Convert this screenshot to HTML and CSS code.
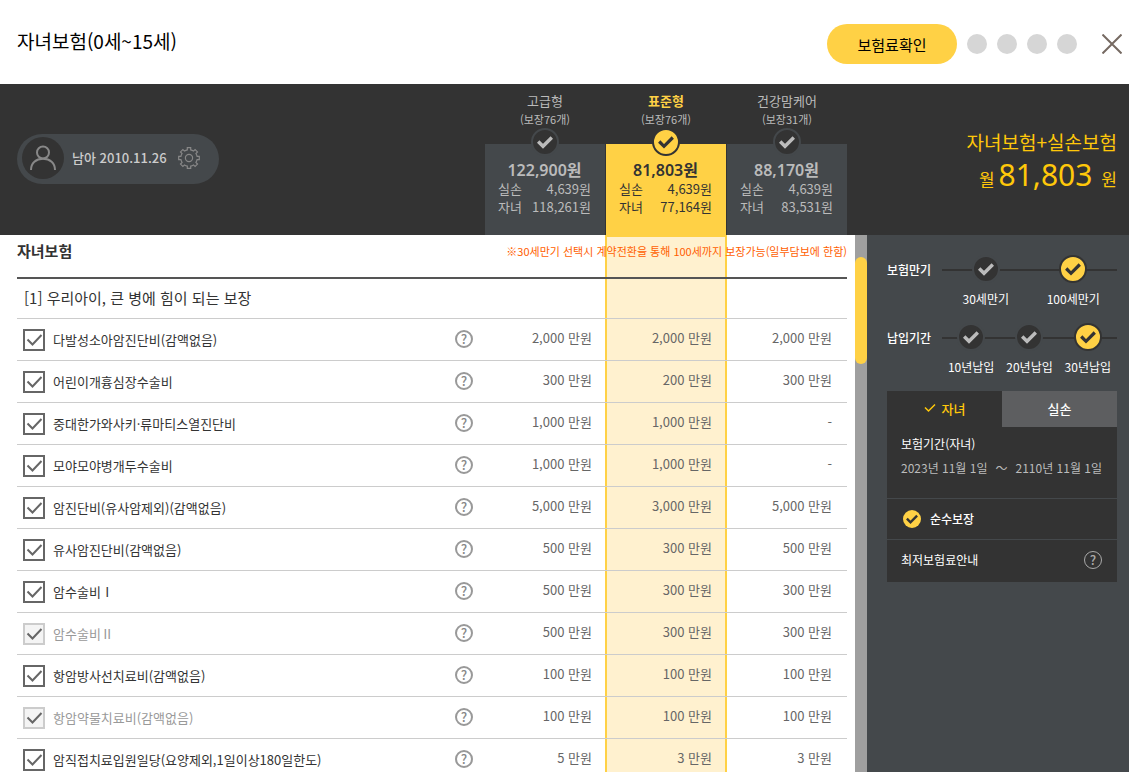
FILE: index.html
```html
<!DOCTYPE html>
<html lang="ko">

<head>
    <meta charset="UTF-8" />
    <meta name="viewport" content="width=device-width, initial-scale=1.0">
    <title>자녀보험</title>
    <link rel="stylesheet" href="styles.css">
</head>

<body>

    <header class="header">
        <h1 class="title">자녀보험(0세~15세)</h1>
        <button class="btn-check" type="button">보험료확인</button>
        <div class="steps">
            <span class="step"></span>
            <span class="step"></span>
            <span class="step"></span>
            <span class="step"></span>
        </div>
        <button class="btn-close" type="button" aria-label="닫기">
            <svg width="20" height="20" viewBox="0 0 20 20"><path d="M0.5 0.5L19.5 19.5M19.5 0.5L0.5 19.5" /></svg>
        </button>
    </header>

    <section class="summary">

        <div class="user">
            <span class="avatar">
                <svg width="26" height="26" viewBox="0 0 26 26"><circle cx="13" cy="7.5" r="6" /><path d="M1 25C1 18 6 13.8 13 13.8S25 18 25 25" /></svg>
            </span>
            <span class="user-name">남아 2010.11.26</span>
            <button class="btn-setting" type="button" aria-label="설정">
                <svg width="22" height="22" viewBox="0 0 22 22"><circle cx="11" cy="11" r="3.6" /><path d="M9.3 0.7h3.4v2.2a8.3 8.3 0 0 1 2.8 1.2l1.6-1.6 2.4 2.4-1.6 1.6a8.3 8.3 0 0 1 1.2 2.8h2.2v3.4h-2.2a8.3 8.3 0 0 1-1.2 2.8l1.6 1.6-2.4 2.4-1.6-1.6a8.3 8.3 0 0 1-2.8 1.2v2.2H9.3v-2.2a8.3 8.3 0 0 1-2.8-1.2l-1.6 1.6-2.4-2.4 1.6-1.6a8.3 8.3 0 0 1-1.2-2.8H0.7V9.3h2.2a8.3 8.3 0 0 1 1.2-2.8L2.5 4.9l2.4-2.4 1.6 1.6a8.3 8.3 0 0 1 2.8-1.2z" /></svg>
            </button>
        </div>

        <div class="plans">
            <label class="plan">
                <strong class="plan-name">고급형</strong>
                <span class="plan-count">(보장76개)</span>
                <span class="plan-card">
                    <input class="round-check" type="radio" name="plan">
                    <b class="plan-price">122,900원</b>
                    <span class="plan-row"><span>실손</span><span>4,639원</span></span>
                    <span class="plan-row"><span>자녀</span><span>118,261원</span></span>
                </span>
            </label>
            <label class="plan plan-on">
                <strong class="plan-name">표준형</strong>
                <span class="plan-count">(보장76개)</span>
                <span class="plan-card">
                    <input class="round-check" type="radio" name="plan" checked>
                    <b class="plan-price">81,803원</b>
                    <span class="plan-row"><span>실손</span><span>4,639원</span></span>
                    <span class="plan-row"><span>자녀</span><span>77,164원</span></span>
                </span>
            </label>
            <label class="plan">
                <strong class="plan-name">건강맘케어</strong>
                <span class="plan-count">(보장31개)</span>
                <span class="plan-card">
                    <input class="round-check" type="radio" name="plan">
                    <b class="plan-price">88,170원</b>
                    <span class="plan-row"><span>실손</span><span>4,639원</span></span>
                    <span class="plan-row"><span>자녀</span><span>83,531원</span></span>
                </span>
            </label>
        </div>

        <div class="total">
            <p class="total-name">자녀보험+실손보험</p>
            <p class="total-price"><span>월</span><strong>81,803</strong><span>원</span></p>
        </div>

    </section>

    <main class="content">

        <div class="coverage">
            <div class="coverage-inner">

                <div class="column-mark"></div>

                <div class="coverage-head">
                    <h2>자녀보험</h2>
                    <p>※30세만기 선택시 계약전환을 통해 100세까지 보장가능(일부담보에 한함)</p>
                </div>

                <table class="coverage-table">
                    <colgroup>
                        <col>
                        <col class="col-help">
                        <col class="col-price">
                        <col class="col-price">
                        <col class="col-price">
                    </colgroup>
                    <thead>
                        <tr>
                            <th colspan="5">[1] 우리아이, 큰 병에 힘이 되는 보장</th>
                        </tr>
                    </thead>
                    <tbody>
                        <tr>
                            <td><label class="item"><input type="checkbox" checked>다발성소아암진단비(감액없음)</label></td>
                            <td><button class="help" type="button">?</button></td>
                            <td class="price">2,000 만원</td>
                            <td class="price">2,000 만원</td>
                            <td class="price">2,000 만원</td>
                        </tr>
                        <tr>
                            <td><label class="item"><input type="checkbox" checked>어린이개흉심장수술비</label></td>
                            <td><button class="help" type="button">?</button></td>
                            <td class="price">300 만원</td>
                            <td class="price">200 만원</td>
                            <td class="price">300 만원</td>
                        </tr>
                        <tr>
                            <td><label class="item"><input type="checkbox" checked>중대한가와사키·류마티스열진단비</label></td>
                            <td><button class="help" type="button">?</button></td>
                            <td class="price">1,000 만원</td>
                            <td class="price">1,000 만원</td>
                            <td class="price">-</td>
                        </tr>
                        <tr>
                            <td><label class="item"><input type="checkbox" checked>모야모야병개두수술비</label></td>
                            <td><button class="help" type="button">?</button></td>
                            <td class="price">1,000 만원</td>
                            <td class="price">1,000 만원</td>
                            <td class="price">-</td>
                        </tr>
                        <tr>
                            <td><label class="item"><input type="checkbox" checked>암진단비(유사암제외)(감액없음)</label></td>
                            <td><button class="help" type="button">?</button></td>
                            <td class="price">5,000 만원</td>
                            <td class="price">3,000 만원</td>
                            <td class="price">5,000 만원</td>
                        </tr>
                        <tr>
                            <td><label class="item"><input type="checkbox" checked>유사암진단비(감액없음)</label></td>
                            <td><button class="help" type="button">?</button></td>
                            <td class="price">500 만원</td>
                            <td class="price">300 만원</td>
                            <td class="price">500 만원</td>
                        </tr>
                        <tr>
                            <td><label class="item"><input type="checkbox" checked>암수술비Ⅰ</label></td>
                            <td><button class="help" type="button">?</button></td>
                            <td class="price">500 만원</td>
                            <td class="price">300 만원</td>
                            <td class="price">300 만원</td>
                        </tr>
                        <tr>
                            <td><label class="item item-off"><input type="checkbox" checked disabled>암수술비Ⅱ</label></td>
                            <td><button class="help" type="button">?</button></td>
                            <td class="price">500 만원</td>
                            <td class="price">300 만원</td>
                            <td class="price">300 만원</td>
                        </tr>
                        <tr>
                            <td><label class="item"><input type="checkbox" checked>항암방사선치료비(감액없음)</label></td>
                            <td><button class="help" type="button">?</button></td>
                            <td class="price">100 만원</td>
                            <td class="price">100 만원</td>
                            <td class="price">100 만원</td>
                        </tr>
                        <tr>
                            <td><label class="item item-off"><input type="checkbox" checked disabled>항암약물치료비(감액없음)</label></td>
                            <td><button class="help" type="button">?</button></td>
                            <td class="price">100 만원</td>
                            <td class="price">100 만원</td>
                            <td class="price">100 만원</td>
                        </tr>
                        <tr>
                            <td><label class="item"><input type="checkbox" checked>암직접치료입원일당(요양제외,1일이상180일한도)</label></td>
                            <td><button class="help" type="button">?</button></td>
                            <td class="price">5 만원</td>
                            <td class="price">3 만원</td>
                            <td class="price">3 만원</td>
                        </tr>
                    </tbody>
                </table>

            </div>
        </div>

        <div class="scrollbar"><div class="scroll-thumb"></div></div>

        <aside class="side">

            <div class="option">
                <h3>보험만기</h3>
                <div class="option-list">
                    <label><input class="round-check" type="radio" name="maturity"><span>30세만기</span></label>
                    <label><input class="round-check" type="radio" name="maturity" checked><span>100세만기</span></label>
                </div>
            </div>

            <div class="option">
                <h3>납입기간</h3>
                <div class="option-list">
                    <label><input class="round-check" type="radio" name="payment"><span>10년납입</span></label>
                    <label><input class="round-check" type="radio" name="payment"><span>20년납입</span></label>
                    <label><input class="round-check" type="radio" name="payment" checked><span>30년납입</span></label>
                </div>
            </div>

            <div class="tabs">
                <button class="tab tab-on" type="button">
                    <svg width="12" height="10" viewBox="0 0 12 10"><path d="M1 4.5L4.5 8L11 1.5" /></svg>
                    자녀
                </button>
                <button class="tab" type="button">실손</button>
            </div>

            <div class="panel">
                <div class="period">
                    <h4>보험기간(자녀)</h4>
                    <p><span>2023년 11월 1일</span><span>～</span><span>2110년 11월 1일</span></p>
                </div>
                <label class="pure"><input class="round-check" type="radio" name="type" checked>순수보장</label>
                <div class="guide">
                    <span>최저보험료안내</span>
                    <button class="help help-dark" type="button">?</button>
                </div>
            </div>

        </aside>

    </main>

</body>

</html>
```

FILE: styles.css
```css
* {
    margin: 0;
    padding: 0;
    box-sizing: border-box;
}

body {
    height: 100vh;
    display: flex;
    flex-direction: column;
    overflow: hidden;
    background: #fff;
    color: #333;
    font-family: "Noto Sans CJK KR", sans-serif;
    font-size: 13px;
    line-height: 18px;
}

button {
    border: 0;
    background: none;
    font-family: inherit;
    cursor: pointer;
}

svg {
    display: block;
    fill: none;
}

/* header */

.header {
    height: 84px;
    flex: none;
    display: flex;
    align-items: center;
    padding: 4px 7px 0 17px;
}

.title {
    flex: 1;
    padding-bottom: 6px;
    color: #000;
    font-size: 19px;
    font-weight: 400;
    line-height: 28px;
}

.btn-check {
    width: 130px;
    height: 40px;
    border-radius: 20px;
    background: #ffd145;
    color: #000;
    font-size: 15px;
}

.steps {
    display: flex;
    gap: 10px;
    margin: 0 25px 0 10px;
}

.step {
    width: 20px;
    height: 20px;
    border-radius: 50%;
    background: #d6d6d6;
}

.btn-close svg {
    stroke: #766a62;
    stroke-width: 2;
}

/* summary */

.summary {
    flex: none;
    display: flex;
    align-items: stretch;
    height: 151px;
    padding-left: 17px;
    background: #333;
}

.user {
    display: flex;
    align-items: center;
    width: 202px;
    height: 50px;
    padding: 0 19px 2px 5px;
    margin: 50px auto 0 0;
    border-radius: 25px;
    background: #44484b;
    color: #ccc;
}

.avatar {
    display: flex;
    align-items: center;
    justify-content: center;
    width: 42px;
    height: 42px;
    margin-right: 8px;
    border-radius: 50%;
    background: #333;
}

.avatar svg {
    stroke: #888;
    stroke-width: 2;
}

.user-name {
    flex: 1;
    font-weight: 500;
    white-space: nowrap;
}

.btn-setting svg {
    stroke: #888;
    stroke-width: 1.2;
}

.plans {
    display: flex;
    gap: 1px;
}

.plan {
    display: flex;
    flex-direction: column;
    width: 120px;
    padding-top: 8px;
    color: #bbb;
    text-align: center;
}

.plan-name {
    font-weight: 400;
}

.plan-count {
    font-size: 11px;
}

.plan-card {
    position: relative;
    flex: 1;
    display: flex;
    flex-direction: column;
    margin-top: 16px;
    padding: 16px 14px 0 13px;
    background: #44484b;
}

.plan-price {
    font-family: "Noto Sans", "Noto Sans CJK KR", sans-serif;
    font-size: 16px;
    font-weight: 600;
    line-height: 20px;
}

.plan-row {
    display: flex;
    justify-content: space-between;
}

.plan-on .plan-name {
    color: #ffd145;
    font-weight: 700;
}

.plan-on .plan-card {
    background: #ffd145;
    color: #333;
}

.round-check {
    appearance: none;
    flex: none;
    width: 28px;
    height: 28px;
    border: 2px solid #44484b;
    border-radius: 50%;
    background: #333 url("data:image/svg+xml,%3Csvg xmlns='http://www.w3.org/2000/svg' viewBox='0 0 24 24'%3E%3Cpath d='M5.2 11.5L10 16.3L18.8 7.5' fill='none' stroke='%23bbb' stroke-width='3.4'/%3E%3C/svg%3E") center / 24px no-repeat;
}

.round-check:checked {
    border-color: #333;
    background-color: #ffd145;
    background-image: url("data:image/svg+xml,%3Csvg xmlns='http://www.w3.org/2000/svg' viewBox='0 0 24 24'%3E%3Cpath d='M5.2 11.5L10 16.3L18.8 7.5' fill='none' stroke='%23333' stroke-width='3.2'/%3E%3C/svg%3E");
}

.plan-card .round-check {
    position: absolute;
    top: -16px;
    left: 46px;
}

.total {
    width: 282px;
    padding: 44px 12px 0 0;
    color: #ffc80a;
    text-align: right;
}

.total-name {
    font-size: 19px;
    line-height: 28px;
}

.total-price {
    display: flex;
    align-items: baseline;
    justify-content: flex-end;
    gap: 4px;
    font-size: 17px;
    line-height: 38px;
}

.total-price strong {
    margin-right: 5px;
    font-family: "Noto Sans", sans-serif;
    font-size: 30px;
    font-weight: 400;
}

/* coverage list */

.content {
    flex: 1;
    display: flex;
    min-height: 0;
}

.coverage {
    flex: 1;
    overflow-y: auto;
    scrollbar-width: none;
}

.coverage-inner {
    position: relative;
    z-index: 0;
    padding: 0 8px 0 17px;
}

/* yellow band behind the selected plan */
.column-mark {
    position: absolute;
    z-index: -1;
    top: 0;
    right: 128px;
    bottom: 0;
    width: 122px;
    border: 2px solid #ffd145;
    background: #fff1cf;
}

.coverage-head {
    display: flex;
    align-items: center;
    justify-content: space-between;
    height: 42px;
    padding-bottom: 10px;
}

.coverage-head h2 {
    font-size: 15px;
    font-weight: 700;
}

.coverage-head p {
    color: #ff6000;
    font-size: 11px;
}

.coverage-table {
    width: 100%;
    table-layout: fixed;
    border-top: 2px solid #555;
    border-spacing: 0;
}

.col-help {
    width: 34px;
}

.col-price {
    width: 120px;
}

.coverage-table th,
.coverage-table td {
    border-bottom: 1px solid #ccc;
}

.coverage-table th {
    height: 40px;
    padding: 0 0 2px 7px;
    font-size: 15px;
    font-weight: 400;
    text-align: left;
}

.coverage-table td {
    height: 42px;
}

.item {
    display: flex;
    align-items: center;
    gap: 8px;
    padding-left: 6px;
    white-space: nowrap;
}

.item input {
    appearance: none;
    width: 22px;
    height: 22px;
    border: 2px solid #666;
    background: #fff url("data:image/svg+xml,%3Csvg xmlns='http://www.w3.org/2000/svg' viewBox='0 0 22 22'%3E%3Cpath d='M4.5 10.5L9.5 15.5L18.5 6' fill='none' stroke='%23666' stroke-width='2'/%3E%3C/svg%3E") center / 22px no-repeat;
}

.item input:disabled {
    border-color: #ccc;
    background-color: #f4f4f4;
}

.item-off {
    color: #999;
}

.coverage-table .help {
    margin: 0 0 2px 2px;
}

.help {
    display: block;
    width: 18px;
    height: 18px;
    border: 2px solid #999;
    border-radius: 50%;
    color: #888;
    font-size: 13px;
    font-weight: 500;
    line-height: 14px;
    text-align: center;
}

.coverage-table .price {
    padding: 0 15px 3px 0;
    color: #666;
    text-align: right;
}

.scrollbar {
    width: 12px;
    padding-top: 22px;
    background: #9f9f9f;
}

.scroll-thumb {
    height: 107px;
    border-radius: 6px;
    background: #ffd145;
}

/* side options */

.side {
    width: 262px;
    padding: 20px 12px 0 20px;
    background: #44484b;
    color: #fff;
    font-size: 12px;
}

.option {
    display: flex;
    height: 68px;
}

.option h3 {
    width: 55px;
    padding-top: 6px;
    font-size: 12px;
    font-weight: 500;
}

.option-list {
    flex: 1;
    display: flex;
    height: 32px;
    background: linear-gradient(#333, #333) 0 14px / 100% 2px no-repeat;
}

.option-list label {
    flex: 1;
    display: flex;
    flex-direction: column;
    align-items: center;
    gap: 7px;
    white-space: nowrap;
}

.tabs {
    display: flex;
}

.tab {
    flex: 1;
    display: flex;
    align-items: center;
    justify-content: center;
    gap: 6px;
    height: 36px;
    padding-bottom: 2px;
    background: #5d5e60;
    color: #fff;
    font-size: 13px;
    font-weight: 500;
}

.tab-on {
    background: #333;
    color: #ffc80a;
}

.tab svg {
    stroke: #ffc80a;
    stroke-width: 1.5;
}

.panel {
    background: #333;
}

.period {
    height: 72px;
    padding: 8px 15px 0 14px;
    border-bottom: 1px solid #44484b;
}

.period h4 {
    font-size: 12px;
    font-weight: 400;
}

.period p {
    display: flex;
    justify-content: space-between;
    padding-top: 6px;
    color: #bbb;
}

.pure {
    display: flex;
    align-items: center;
    gap: 9px;
    height: 41px;
    padding-left: 16px;
    border-bottom: 1px solid #44484b;
    font-weight: 500;
}

.pure .round-check {
    width: 18px;
    height: 18px;
    border: 0;
    background-size: 18px;
}

.guide {
    display: flex;
    align-items: center;
    justify-content: space-between;
    height: 42px;
    padding: 0 15px 2px 14px;
}

.help-dark {
    border: 1px solid #aaa;
    color: #aaa;
    line-height: 16px;
}
```
